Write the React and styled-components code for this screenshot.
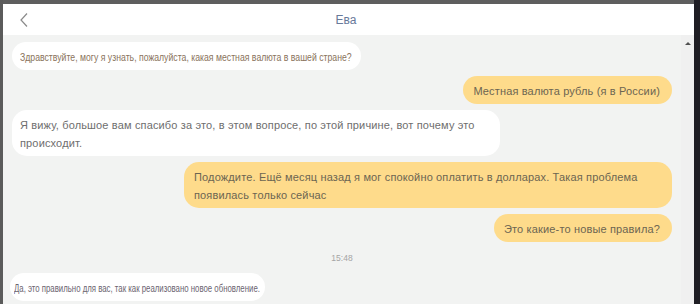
import React from "react";
import styled, { createGlobalStyle } from "styled-components";

const GlobalStyle = createGlobalStyle`
    html, body {
        margin: 0;
        padding: 0;
        background: #1f1e24;
        font-family: "Liberation Sans", Arial, sans-serif;
    }
    * {
        box-sizing: border-box;
    }
`;

const Screen = styled.div`
    display: flex;
    width: 700px;
    height: 304px;
    overflow: hidden;
    background: #1f1e24;
`;

const LeftEdge = styled.div`
    width: 3px;
    background: #5b5b5b;
`;

const Window = styled.div`
    display: flex;
    flex-direction: column;
    width: 691px;
    border-top: 4px solid #5e5e5e;
    background: #f2f3f2;
`;

const Header = styled.div`
    position: relative;
    display: flex;
    align-items: center;
    justify-content: center;
    height: 31px;
    background: #ffffff;
    flex-shrink: 0;
`;

const BackButton = styled.div`
    position: absolute;
    left: 16px;
    top: 8px;
    display: flex;
`;

const Title = styled.div`
    font-size: 12px;
    color: #68799a;
    margin-left: -5px;
`;

const Body = styled.div`
    display: flex;
    flex: 1;
    min-height: 0;
`;

const MessageList = styled.div`
    flex: 1;
    display: flex;
    flex-direction: column;
    gap: 6px;
    padding: 7px 9px 0 9px;
`;

const Row = styled.div`
    display: flex;
    justify-content: ${(p) => (p.$out ? "flex-end" : "flex-start")};
`;

const Bubble = styled.div`
    max-width: 488px;
    margin-left: ${(p) => p.$shift || "0"};
    padding: ${(p) => p.$pad || (p.$out ? "6px 12px 4px 10px" : "6px 11px 4px 8px")};
    border-radius: 15px;
    font-size: 11px;
    line-height: 18px;
    letter-spacing: 0.15px;
    background: ${(p) => (p.$out ? "#fedb8b" : "#ffffff")};
    color: ${(p) => (p.$out ? "#6c6552" : "#6e6e6e")};
`;

const NarrowText = styled.span`
    display: inline-block;
    vertical-align: top;
    font-size: ${(p) => p.$size};
    letter-spacing: 0;
    color: ${(p) => p.$color};
    transform-origin: left center;
    transform: scaleX(${(p) => p.$scale});
    width: ${(p) => p.$width};
    white-space: nowrap;
`;

const TimeStamp = styled.div`
    text-align: center;
    font-size: 8.5px;
    line-height: 11px;
    color: #a5a5a5;
    margin: 5px 0 3px;
`;

const Scrollbar = styled.div`
    width: 13px;
    background: #f0f0f0;
    display: flex;
    justify-content: center;
    padding-top: 7px;
`;

const ArrowUp = styled.div`
    width: 0;
    height: 0;
    border-left: 3px solid transparent;
    border-right: 3px solid transparent;
    border-bottom: 3px solid #505050;
`;

const App = () => {
    return (
        <>
            <GlobalStyle />
            <Screen>
                <LeftEdge />
                <Window>
                    <Header>
                        <BackButton>
                            <svg width="10" height="16" viewBox="0 0 10 16">
                                <path d="M8 1.5 L2 8 L8 14.5" fill="none" stroke="#8a8a8a" strokeWidth="1.2" />
                            </svg>
                        </BackButton>
                        <Title>Ева</Title>
                    </Header>
                    <Body>
                        <MessageList>
                            <Row>
                                <Bubble $pad="6px 13px 4px 8px">
                                    <NarrowText $size="11px" $color="#8a735c" $scale="0.79" $width="328px">
                                        Здравствуйте, могу я узнать, пожалуйста, какая местная валюта в вашей стране?
                                    </NarrowText>
                                </Bubble>
                            </Row>
                            <Row $out>
                                <Bubble $out>Местная валюта рубль (я в России)</Bubble>
                            </Row>
                            <Row>
                                <Bubble>
                                    Я вижу, большое вам спасибо за это, в этом вопросе, по этой причине, вот почему это происходит.
                                </Bubble>
                            </Row>
                            <Row $out>
                                <Bubble $out>
                                    Подождите. Ещё месяц назад я мог спокойно оплатить в долларах. Такая проблема появилась только сейчас
                                </Bubble>
                            </Row>
                            <Row $out>
                                <Bubble $out>Это какие-то новые правила?</Bubble>
                            </Row>
                            <TimeStamp>15:48</TimeStamp>
                            <Row>
                                <Bubble $shift="-2px" $pad="6px 7px 4px 4px">
                                    <NarrowText $size="11px" $color="#6b6470" $scale="0.71" $width="244px">
                                        Да, это правильно для вас, так как реализовано новое обновление.
                                    </NarrowText>
                                </Bubble>
                            </Row>
                        </MessageList>
                        <Scrollbar>
                            <ArrowUp />
                        </Scrollbar>
                    </Body>
                </Window>
            </Screen>
        </>
    );
};

export default App;
